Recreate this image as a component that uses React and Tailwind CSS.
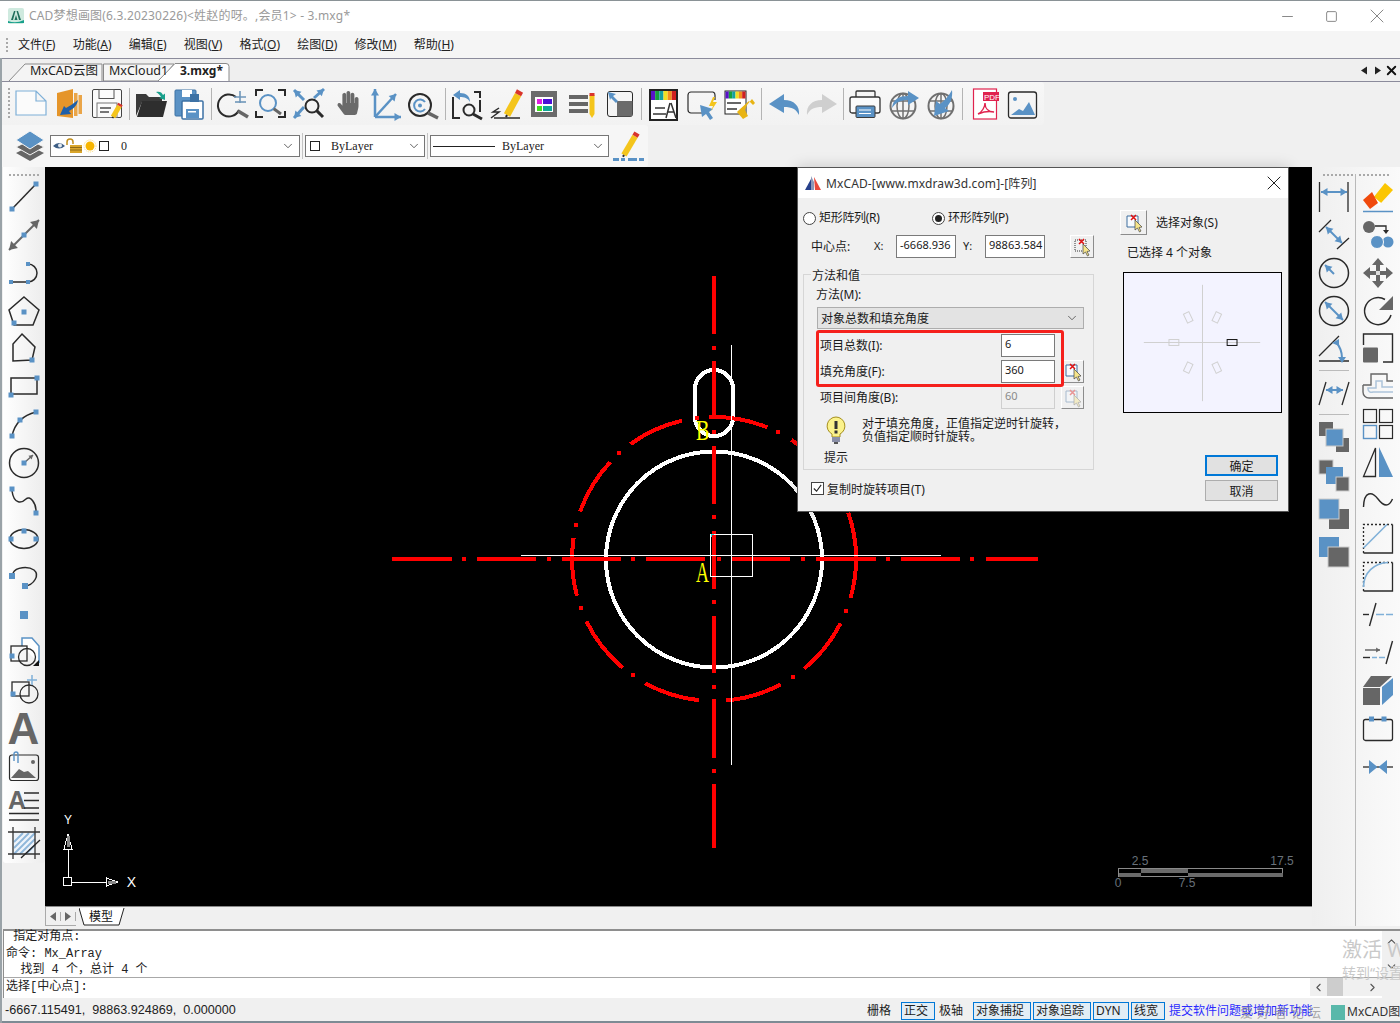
import { ChevronDown, ChevronLeft, ChevronRight, ChevronUp, Minus, Square, X } from "lucide-react";
import { FaHandPaper } from "react-icons/fa";

const B = "#5a92c5";
const G = "#666666";
const K = "#2a2a2a";
const Y = "#f4c51c";
const RD = "#d9342b";

const sans = "font-['Noto_Sans','Noto_Sans_CJK_SC',sans-serif]";
const mono = "font-['Liberation_Mono','Noto_Sans_CJK_SC',monospace]";
const serif = "font-['Liberation_Serif','Noto_Sans_CJK_SC',serif]";

const Box = ({ children }) => (
  <svg viewBox="0 0 32 32" width="32" height="32" fill="none" className="block shrink-0 overflow-visible">
    {children}
  </svg>
);

const Sq = ({ x, y, s = 5 }) => <rect x={x - s / 2} y={y - s / 2} width={s} height={s} fill={B} />;

// line with a filled head at the end (and at the start too when both is set)
const Arrow = ({ x1, y1, x2, y2, c = B, w = 2, h = 5, both }) => {
  const a = Math.atan2(y2 - y1, x2 - x1);
  const head = (x, y, t) => {
    const p = (d, o) => `${x + Math.cos(t) * d - Math.sin(t) * o},${y + Math.sin(t) * d + Math.cos(t) * o}`;
    return `${p(0, 0)} ${p(-h * 1.3, h * 0.8)} ${p(-h * 1.3, -h * 0.8)}`;
  };
  return (
    <>
      <line x1={x1} y1={y1} x2={x2} y2={y2} stroke={c} strokeWidth={w} />
      <polygon points={head(x2, y2, a)} fill={c} />
      {both && <polygon points={head(x1, y1, a + Math.PI)} fill={c} />}
    </>
  );
};

const Pencil = ({ x1, y1, x2, y2, w = 6 }) => {
  const dx = x2 - x1;
  const dy = y2 - y1;
  return (
    <>
      <line x1={x1} y1={y1} x2={x1 + dx * 0.85} y2={y1 + dy * 0.85} stroke={Y} strokeWidth={w} />
      <line x1={x1 + dx * 0.85} y1={y1 + dy * 0.85} x2={x2} y2={y2} stroke={RD} strokeWidth={w} />
      <line x1={x1} y1={y1} x2={x1 - dx * 0.08} y2={y1 - dy * 0.08} stroke={K} strokeWidth={2} />
    </>
  );
};

const Glass = ({ cx, cy, r, x, y, c = K, sw = 2, hc = K, hw = 3 }) => (
  <>
    <circle cx={cx} cy={cy} r={r} stroke={c} strokeWidth={sw} />
    <line x1={cx + r * 0.72} y1={cy + r * 0.72} x2={x} y2={y} stroke={hc} strokeWidth={hw} />
  </>
);

const Stripes = ({ x, y, w, h }) => {
  const cols = ["#5a12c8", "#14a03c", "#14a0a0", "#f0e020", "#f09020", "#d02020"];
  return cols.map((c, i) => <rect key={c} x={x + (i * w) / 6} y={y} width={w / 6} height={h} fill={c} />);
};

const Globe = () => (
  <>
    <circle cx="16" cy="18" r="12.5" stroke="#707070" strokeWidth="2" />
    <ellipse cx="16" cy="18" rx="6" ry="12.5" stroke="#707070" strokeWidth="1.5" />
    <line x1="4" y1="13" x2="28" y2="13" stroke="#707070" strokeWidth="1.5" />
    <line x1="4" y1="23" x2="28" y2="23" stroke="#707070" strokeWidth="1.5" />
    <line x1="16" y1="6" x2="16" y2="30" stroke="#707070" strokeWidth="1.5" />
  </>
);

const toolbar = [
  [<path key="a" d="M1 3H21L31 13V27H1ZM21 3V13H31" fill="#fbfbfb" stroke="#7fb0d8" strokeWidth="1.2" />],
  [
    <path key="a" d="M4 5L20 1V30L4 28Z" fill="#e5952a" />,
    <rect key="b" x="21" y="5" width="3.5" height="23" fill="#eaa548" />,
    <rect key="c" x="25.5" y="7" width="3.5" height="19" fill="#eaa548" />,
    <path key="d" d="M25 12C24 18 20 21 16 23L18 26L7 27L11 18L13 20C17 18 21 15 25 12Z" fill="#1f5fa8" />,
  ],
  [
    <rect key="a" x="1.5" y="1.5" width="29" height="28" rx="1.5" fill="#fbfbfb" stroke="#444" />,
    <rect key="b" x="8" y="1.5" width="15" height="9" stroke="#555" />,
    <rect key="c" x="6" y="15" width="20" height="14.5" stroke="#777" />,
    <rect key="d" x="9" y="19" width="11" height="2" fill="#777" />,
    <rect key="e" x="9" y="23" width="9" height="2" fill="#777" />,
    <Pencil key="f" x1={22} y1={29} x2={29.5} y2={16} w={5} />,
  ],
  "s6",
  [
    <path key="a" d="M1 6H11L14 9H27V14H7L1 28Z" fill="#3a3a3a" />,
    <path key="b" d="M7 13H32L28 29H2Z" fill="#2e2e2e" />,
    <path key="c" d="M21 4C24 3 27 4 28 7L30 5.5L30 12L24 10L26 9C25 7 23 5 21 4Z" fill="#18a08c" />,
  ],
  [
    <rect key="a" x="2" y="2" width="21" height="26" rx="1" fill={B} stroke="#3d72a5" />,
    <rect key="b" x="9" y="13" width="21" height="18" rx="1" fill="#fff" stroke="#3d72a5" strokeWidth="1.5" />,
    <rect key="c" x="9" y="2" width="10" height="7" fill="#fff" />,
    <rect key="d" x="17" y="6" width="9" height="8" fill="#3d72a5" />,
    <rect key="e" x="13" y="21" width="13" height="9" fill={B} />,
    <rect key="f" x="15" y="23" width="8" height="1.5" fill="#fff" />,
  ],
  "s6",
  [
    <path key="a" d="M19 9A11 11 0 1 0 22 22" stroke={K} strokeWidth="2" />,
    <line key="b" x1="21" y1="23" x2="31" y2="29" stroke="#666" strokeWidth="3.5" />,
    <path key="c" d="M17 9H29M23 3V15" stroke="#6f97ba" strokeWidth="1.6" />,
    <path key="d" d="M18 14H29" stroke="#6f97ba" strokeWidth="1.6" />,
  ],
  [
    <path key="a" d="M1 8V2H8M23 2H30V8M1 23V29H8M23 29H30V23" stroke={K} strokeWidth="2" />,
    <Glass key="b" cx={13} cy={15} r={8} x={26} y={26} c={B} sw={2} hc={G} />,
  ],
  [
    <Arrow key="a" x1={11} y1={12} x2={1} y2={2} w={3} h={5} />,
    <Arrow key="b" x1={21} y1={10} x2={31} y2={1} w={3} h={5} />,
    <Arrow key="c" x1={11} y1={19} x2={1} y2={30} w={3} h={5} />,
    <Glass key="d" cx={19} cy={18} r={6.5} x={30} y={29} />,
  ],
  [<FaHandPaper key="a" x="5" y="3" size={24} color="#6a6a6a" />],
  [
    <Arrow key="a" x1={6} y1={29} x2={6} y2={1} w={2.5} h={5} />,
    <Arrow key="b" x1={6} y1={29} x2={32} y2={29} w={2.5} h={5} />,
    <Arrow key="c" x1={6} y1={29} x2={27} y2={6} w={2.5} h={5} />,
  ],
  [
    <Glass key="a" cx={13} cy={17} r={11} x={31} y={30} hc={G} hw={3.5} />,
    <path key="b" d="M18 14A6 6 0 1 0 18 21" stroke={B} strokeWidth="2" />,
    <circle key="c" cx="13" cy="17.5" r="2" fill={B} />,
  ],
  "s7",
  [
    <path key="a" d="M1 9V30H8M22 4H28V10M28 24V12" stroke={K} strokeWidth="2" />,
    <path key="b" d="M1 7L8 2V5C14 5 18 8 18 14C16 10 12 9 8 9V12Z" fill={B} />,
    <Glass key="c" cx={17} cy={22} r={5.5} x={30} y={31} />,
  ],
  [
    <Pencil key="a" x1={17} y1={27} x2={30} y2={3} w={7} />,
    <path key="b" d="M1 30L9 24H3L9 20" stroke={K} strokeWidth="1.5" />,
    <line key="c" x1="4" y1="30" x2="30" y2="30" stroke={K} strokeWidth="1.5" />,
  ],
  [
    <rect key="a" x="3" y="3" width="26" height="26" fill="#6b6b6b" />,
    <rect key="b" x="7" y="9" width="18" height="15" fill="#fff" />,
    <rect key="c" x="9" y="11" width="5" height="5" fill="#e020e0" />,
    <rect key="d" x="15" y="11" width="9" height="5" fill="#4a10d8" />,
    <rect key="e" x="9" y="18" width="5" height="5" fill="#40e020" />,
    <rect key="f" x="15" y="18" width="9" height="5" fill="#10a898" />,
  ],
  [
    <rect key="a" x="3" y="7" width="19" height="4" fill={G} />,
    <rect key="b" x="3" y="14" width="19" height="4" fill={G} />,
    <rect key="c" x="3" y="21" width="19" height="4" fill={G} />,
    <rect key="d" x="23.5" y="7" width="5" height="19" fill={Y} />,
    <rect key="e" x="23.5" y="5" width="5" height="3" fill={RD} />,
    <path key="f" d="M23.5 26L26 30L28.5 26Z" fill={Y} />,
  ],
  [
    <rect key="a" x="3.5" y="3.5" width="25" height="25" rx="2.5" stroke={K} />,
    <path key="b" d="M13 13H28.5V26A2 2 0 0 1 26 28.5H13Z" fill="#6b6b6b" />,
    <path key="c" d="M4 4L12 6L9 8L14 13L12 15L7 10L6 12Z" fill={B} />,
  ],
  "s5",
  [
    <rect key="a" x="3" y="2" width="27" height="30" fill="#fff" stroke="#222" strokeWidth="2" />,
    <Stripes key="b" x={4} y={3} w={25} h={9} />,
    <rect key="c" x="8" y="19" width="10" height="2" fill={G} />,
    <rect key="d" x="6" y="25" width="13" height="2" fill={G} />,
    <path key="e" d="M23 15L19 30M24 15L29 30M21 24H27" stroke="#333" strokeWidth="1.5" />,
  ],
  [
    <path key="a" d="M20 25H6A3 3 0 0 1 3 22V7A3 3 0 0 1 6 4H28A3 3 0 0 1 30 7V12" stroke={K} strokeWidth="1.2" />,
    <path key="b" d="M15 17L28 21L24 24L28 30L25 32L21 26L17 29Z" fill={B} />,
    <path key="c" d="M28 9L24 18H28L26 23L32 14H28L30 9Z" fill={Y} />,
  ],
  [
    <rect key="a" x="2" y="3" width="21" height="23" fill="#fff" stroke="#222" />,
    <Stripes key="b" x={2.5} y={3.5} w={20} h={7} />,
    <path key="c" d="M4 15H18M4 21H14" stroke={G} strokeWidth="2" />,
    <path key="d" d="M16 22L26 13L30 17L32 15L29 11L24 17L22 22L25 28L20 31L14 24Z" fill="#e8b414" />,
  ],
  "s7",
  [<path key="a" d="M1 16L16 6V12C26 12 32 18 31 27C28 21 24 19 16 19V25Z" fill={B} />],
  [<path key="a" d="M31 16L16 6V12C6 12 0 18 1 27C4 21 8 19 16 19V25Z" fill="#cfcfcf" />],
  "s5",
  [
    <rect key="a" x="7" y="3" width="19" height="8" rx="1" stroke="#333" strokeWidth="1.3" />,
    <rect key="b" x="1" y="9" width="30" height="16" rx="2" fill="#fbfbfb" stroke="#333" strokeWidth="1.3" />,
    <rect key="c" x="7" y="18" width="19" height="11.5" rx="1" fill={B} stroke="#3b3b3b" />,
    <path key="d" d="M10 22H22M10 25.5H22" stroke="#fff" />,
  ],
  [
    <Globe key="a" />,
    <path key="b" d="M5 20C6 11 12 8 21 8V3L32 10L21 17V12C14 12 9 14 5 20Z" fill={B} />,
  ],
  [
    <Globe key="a" />,
    <path key="b" d="M27 2C28 10 25 17 20 20L24 23L9 28L11 13L15 16C19 13 24 8 27 2Z" fill={B} />,
  ],
  "s5",
  [
    <rect key="a" x="5.5" y="1" width="23" height="30" fill="#fff" stroke="#e0224e" strokeWidth="1.2" />,
    <rect key="b" x="15" y="4" width="16" height="9" fill="#e0224e" />,
    <text key="c" x="16" y="11.5" fontSize="8" fill="#fff" fontFamily="Liberation Sans">PDF</text>,
    <path key="d" d="M10 26C14 24 17 19 17 15C17 20 20 24 26 24C21 23 15 24 10 26Z" stroke="#e0224e" strokeWidth="1.4" />,
  ],
  [
    <rect key="a" x="2.5" y="4" width="28" height="26" rx="2.5" stroke={K} strokeWidth="1.3" />,
    <circle key="b" cx="9" cy="11" r="2" fill={B} />,
    <path key="c" d="M5 27L13 21L17 23L23 14L29 27Z" fill={B} />,
  ],
];

const leftIcons = [
  <Box key="1"><line x1="4" y1="28" x2="28" y2="3" stroke={K} strokeWidth="1.5" /><Sq x={28} y={3} /><Sq x={4} y={28} /></Box>,
  <Box key="2"><Arrow x1={1} y1={31} x2={31} y2={1} c={G} w={2} h={6} both /><Sq x={16} y={16} /></Box>,
  <Box key="3"><path d="M3 25H20A9 9 0 0 0 20 7" stroke={K} strokeWidth="1.5" /><Sq x={3} y={25} s={4} /><Sq x={20} y={25} s={4} /><Sq x={20} y={7} s={4} /></Box>,
  <Box key="4"><path d="M16 2L31 15L25 30H6L1 15Z" stroke={K} strokeWidth="1.5" /><Sq x={16} y={17} /><Sq x={6} y={28} /></Box>,
  <Box key="5"><path d="M14 1L27 14L24 27L5 28V11Z" stroke={K} strokeWidth="1.5" /><Sq x={24} y={27} /></Box>,
  <Box key="6"><rect x="3" y="7" width="26" height="16" stroke={K} strokeWidth="1.5" /><Sq x={29} y={7} /><Sq x={3} y={24} /></Box>,
  <Box key="7"><path d="M4 27Q8 8 28 3" stroke={K} strokeWidth="1.5" /><Sq x={4} y={27} /><Sq x={12} y={11} /><Sq x={28} y={3} /></Box>,
  <Box key="8"><circle cx="16" cy="16" r="14.5" stroke={K} strokeWidth="1.5" /><Arrow x1={16} y1={16} x2={25} y2={8} c={G} w={1.5} h={3} /><Sq x={16} y={16} /></Box>,
  <Box key="9"><path d="M4 6C6 20 14 18 18 14C22 10 28 18 28 26" stroke={K} strokeWidth="1.5" /><Sq x={4} y={4} /><Sq x={28} y={28} /></Box>,
  <Box key="10"><ellipse cx="16" cy="16" rx="14" ry="9.5" stroke={K} strokeWidth="1.5" /><Sq x={3} y={16} /><Sq x={28} y={16} /><Sq x={16} y={8} /></Box>,
  <Box key="11"><path d="M5 12C8 6 20 5 26 9C32 14 26 24 17 25" stroke={K} strokeWidth="1.5" /><Sq x={4} y={15} s={6} /><Sq x={17} y={25} s={6} /></Box>,
  <Box key="12"><Sq x={16} y={16} s={8} /></Box>,
  <Box key="13">
    <path d="M14 9V1H24L31 9V26" fill="#fff" stroke={B} strokeWidth="1.5" />
    <rect x="3" y="9" width="16" height="15" stroke={K} strokeWidth="1.3" />
    <circle cx="19" cy="20" r="8.5" stroke={K} strokeWidth="1.3" />
    <Sq x={4} y={19} />
    <path d="M25 29H31V23Z" fill="#111" />
  </Box>,
  <Box key="14">
    <rect x="4" y="7" width="17" height="14" stroke={K} strokeWidth="1.3" />
    <circle cx="21" cy="19" r="9" stroke={K} strokeWidth="1.3" />
    <Sq x={5} y={19} />
    <path d="M24 0V10M19 5H29" stroke="#7fb0d8" strokeWidth="1.5" />
  </Box>,
  <span key="15" className="block text-[44px] leading-[38px] font-bold text-[#666] font-['Liberation_Sans',sans-serif]">A</span>,
  <Box key="16">
    <rect x="1.5" y="4" width="29" height="25.5" rx="2.5" stroke={K} strokeWidth="1.2" />
    <path d="M3 27L11 18L16 21L20 20L28 27Z" fill={G} />
    <circle cx="25" cy="11" r="2" fill={G} />
    <path d="M6 10V3A2 2 0 0 1 10 3V12" stroke={B} strokeWidth="1.4" />
  </Box>,
  <Box key="17">
    <text x="0" y="20" fontSize="25" fontWeight="700" fill={G} fontFamily="Liberation Sans">A</text>
    <path d="M16 4H31M16 11.500H31M16 19H31M1 24.500H31M1 31H31" stroke={K} strokeWidth="1.4" />
  </Box>,
  <Box key="18">
    <path d="M5 5L27 5L27 27L5 27Z" fill="#eef4fa" />
    <path d="M6 15L15 6M6 21L21 6M6 27L27 6M12 27L27 12M18 27L27 18" stroke="#8fb7da" strokeWidth="1.8" />
    <path d="M0 5H32M0 27H32M5 0V32M27 0V32" stroke="#333" strokeWidth="1.3" />
    <path d="M13 31L32 13" stroke="#222" strokeWidth="1.3" />
  </Box>,
];

const rightA = [
  <Box key="1"><path d="M1.500 1V31M30 1V31" stroke={K} strokeWidth="1.300" /><Arrow x1={3} y1={11} x2={29} y2={11} h={5} both /></Box>,
  <Box key="2"><path d="M1 13L13 1M19 30L31 19" stroke={K} strokeWidth="1.300" /><Arrow x1={8} y1={8} x2={24} y2={24} h={5} both /></Box>,
  <Box key="3"><circle cx="16" cy="16" r="14.500" stroke={K} strokeWidth="1.500" /><Arrow x1={16} y1={17} x2={7} y2={8} h={5} /></Box>,
  <Box key="4"><circle cx="16" cy="16" r="14.500" stroke={K} strokeWidth="1.500" /><Arrow x1={7} y1={7} x2={25} y2={25} h={5} both /></Box>,
  <Box key="5"><path d="M1 23L21 3M1 28H31" stroke={K} strokeWidth="1.300" /><path d="M18 9Q24 16 24 25" stroke={B} strokeWidth="2" /><path d="M14 10L21 6L21 13ZM20 24H28L24 30Z" fill={B} /></Box>,
];

const rightA2 = [
  <Box key="7"><rect x="1" y="1" width="14" height="14" fill={G} /><rect x="18" y="17" width="13" height="14" fill={G} /><rect x="8" y="8" width="17" height="17" fill={B} stroke="#c6c6c6" /></Box>,
  <Box key="8"><rect x="1" y="1" width="14" height="14" fill={G} stroke="#ccc" /><rect x="8" y="8" width="17" height="17" fill={B} /><rect x="18" y="18" width="13" height="14" fill={G} stroke="#ccc" /></Box>,
  <Box key="9"><rect x="11" y="12" width="20" height="20" fill={G} /><rect x="1" y="2" width="20" height="20" fill={B} stroke="#ccc" /></Box>,
  <Box key="10"><rect x="1" y="2" width="20" height="20" fill={B} /><rect x="10" y="12" width="21" height="20" fill={G} stroke="#ccc" /></Box>,
];

const rightB = [
  <Box key="1">
    <path d="M11 17L23 2L31 9L19 22Z" fill="#fbc602" />
    <path d="M9 18L11 15L19 22L17 25Z" fill="#fff" />
    <path d="M1 19L10 11L16 22L8 28Z" fill="#f04a0c" />
    <line x1="1" y1="30.500" x2="31" y2="30.500" stroke={B} strokeWidth="1.500" />
  </Box>,
  <Box key="2">
    <circle cx="7" cy="8" r="6" fill={G} />
    <path d="M13 7H24V12" stroke={K} strokeWidth="1.300" />
    <path d="M21 11H27L24 15Z" fill={K} />
    <circle cx="26" cy="23" r="5.500" fill={B} />
    <circle cx="15" cy="23" r="6.500" fill={B} stroke="#fafafa" />
  </Box>,
  <Box key="3">
    <path d="M16 1L22 8H18V14H24V10L31 16L24 22V18H18V24H22L16 31L10 24H14V18H8V22L1 16L8 10V14H14V8H10Z" fill={G} />
    <rect x="14" y="14" width="4" height="4" fill="#ddd" />
  </Box>,
  <Box key="4">
    <path d="M23 4.500A13.500 13.500 0 1 0 29 20" stroke={K} strokeWidth="1.500" />
    <path d="M31 1V15H17Z" fill={G} />
  </Box>,
  <Box key="5">
    <path d="M1.500 12V1H30.500V29H21" stroke={K} strokeWidth="1.400" />
    <rect x="1" y="14.500" width="15" height="15" rx="1" fill={G} />
  </Box>,
  <Box key="6">
    <path d="M1 14H9V3H25V10H31M31 27H7A6 6 0 0 1 1 21V14" stroke={G} strokeWidth="1.400" />
    <path d="M31 21H11A3.500 3.500 0 0 1 6 18V17H14V10H20V16H31" stroke="#adc4da" strokeWidth="1.500" />
  </Box>,
  <Box key="7">
    <rect x="1.500" y="0.500" width="13" height="13" stroke={K} strokeWidth="1.200" />
    <rect x="17.500" y="0.500" width="13" height="13" stroke={K} strokeWidth="1.200" />
    <rect x="1.500" y="16.500" width="13" height="13" stroke={B} strokeWidth="1.400" />
    <rect x="17.500" y="16.500" width="13" height="13" stroke={K} strokeWidth="1.200" />
  </Box>,
  <Box key="8">
    <path d="M13.500 1V29.500H1.500Z" stroke={K} strokeWidth="1.300" />
    <path d="M17 0V30H31Z" fill={B} />
  </Box>,
  <Box key="9"><path d="M1.500 22C2 6 10 6 16 14C22 22 27 22 30.500 14" stroke={K} strokeWidth="1.400" /></Box>,
  <Box key="10">
    <path d="M1.500 30V1.500H30.500" stroke={K} strokeWidth="1.300" strokeDasharray="2 2" />
    <path d="M1.500 30H30.500V1.500" stroke={K} strokeWidth="1.300" />
    <line x1="1.500" y1="25" x2="25" y2="1.500" stroke="#7fb0d8" strokeWidth="1.600" />
  </Box>,
  <Box key="11">
    <path d="M1.500 30V1.500H30.500" stroke={K} strokeWidth="1.300" strokeDasharray="2 2" />
    <path d="M1.500 30H30.500V1.500" stroke={K} strokeWidth="1.300" />
    <path d="M1.500 26C1.500 12 12 2 26 1.500" stroke="#7fb0d8" strokeWidth="1.600" />
  </Box>,
  <Box key="12">
    <line x1="7.500" y1="27" x2="14" y2="4" stroke={K} strokeWidth="1.400" />
    <path d="M1 15.500H7" stroke={K} strokeWidth="1.400" />
    <path d="M14 15.500H22M24 15.500H31" stroke="#7fb0d8" strokeWidth="1.500" />
  </Box>,
  <Box key="13">
    <line x1="24" y1="27" x2="30.500" y2="4" stroke={K} strokeWidth="1.400" />
    <Arrow x1={3} y1={13} x2={18} y2={13} c={G} w={1.500} h={3} />
    <path d="M1 20.500H8" stroke={K} strokeWidth="1.400" />
    <path d="M10 20.500H15M17 20.500H23" stroke="#7fb0d8" strokeWidth="1.500" />
  </Box>,
  <Box key="14">
    <rect x="1" y="13" width="17" height="17" fill={G} />
    <path d="M1 12L9 1H30L18 12Z" fill={G} />
    <path d="M20 12L31 3V20L20 30Z" fill={B} />
  </Box>,
  <Box key="15">
    <rect x="1.500" y="6.500" width="29" height="21" rx="2" stroke={K} strokeWidth="1.300" />
    <Sq x={9.500} y={6} s={5} />
    <Sq x={22} y={6} s={5} />
  </Box>,
  <Box key="16">
    <line x1="1" y1="16" x2="31" y2="16" stroke={K} strokeWidth="1.300" />
    <path d="M7 9L15.500 16L7 23ZM25 9L16.500 16L25 23Z" fill={B} />
  </Box>,
];

const Grip = ({ className }) => <div className={`border-dotted border-[#a9a9a9] ${className}`} />;

const Sep = ({ w }) => (
  <div className={`flex shrink-0 h-[32px] justify-center ${w}`}>
    <div className="w-px bg-[#b4b4b4]" />
  </div>
);

// red cross and cursor used on the dialog's picker buttons
const PickIcon = ({ faded, dotted }) => (
  <svg viewBox="0 0 20 20" width="20" height="20" fill="none" className={faded ? "opacity-40" : ""}>
    <path d="M3 3H14V14H3Z" fill={dotted ? "none" : "#f7fbff"} stroke={dotted ? "#333" : "#3f6f9e"} strokeDasharray={dotted ? "1 1" : "none"} />
    <path d="M7 2L12 7M12 2L7 7" stroke="#e01010" strokeWidth="1.500" />
    <path d="M11 7L11 17L13.500 15L15.500 19L17 18L15 14.500L18 14Z" fill="#f6e58a" stroke="#444" strokeWidth="0.700" />
  </svg>
);

const PickBtn = ({ className = "", faded, dotted }) => (
  <button
    className={`flex shrink-0 items-center justify-center border border-t-white border-l-white border-r-[#8c8c8c] border-b-[#8c8c8c] bg-[#f0f0f0] ${className}`}
  >
    <PickIcon faded={faded} dotted={dotted} />
  </button>
);

const Field = ({ value, className = "", disabled }) => (
  <div
    className={`flex shrink-0 items-center h-[23px] border px-[3px] pb-[2px] text-[11px] ${
      disabled ? "border-[#cfcfcf] bg-[#f0f0f0] text-[#8a8a8a]" : "border-[#7a7a7a] bg-white text-[#1a1a1a]"
    } ${className}`}
  >
    {value}
  </div>
);

const Radio = ({ checked }) => (
  <span className="flex shrink-0 w-[13px] h-[13px] items-center justify-center rounded-full border border-[#444] bg-white">
    {checked && <span className="w-[7px] h-[7px] rounded-full bg-[#222]" />}
  </span>
);

const deg = (a) => (a * Math.PI) / 180;
const onRing = (a, r = 142) => [714 + r * Math.cos(deg(a)), 559 + r * Math.sin(deg(a))];
const arcs = [
  [27, 50.5], [62, 85], [96, 119], [130, 154], [165, 188.5], [199.5, 223], [234, 257], [268, 292], [303, 326], [341, 376],
];
const ringDots = [21.5, 56, 90, 125, 160, 194, 228, 263, 297];
const hDash = [[392, 452], [477, 536], [562, 621], [646, 705], [732, 790], [816, 876], [901, 960], [986, 1038]];
const hDots = [464, 549, 633, 719, 803, 888, 972];
const vDash = [[276, 334], [361, 417], [446, 504], [531, 589], [616, 673], [700, 758], [784, 848]];
const vDots = [348, 432, 517, 602, 687, 771];

function Drawing() {
  return (
    <svg viewBox="45 167 1267 739" fill="none" className="block w-full h-full">
      <g shapeRendering="crispEdges">
        <circle cx="714" cy="559.500" r="108" stroke="#fff" strokeWidth="4" />
        <rect x="695" y="370" width="38" height="66" rx="19" stroke="#fff" strokeWidth="4" />
        {hDash.map(([a, b]) => <rect key={a} x={a} y="557" width={b - a} height="4" fill="#f00" />)}
        {hDots.map((x) => <rect key={x} x={x - 2} y="557" width="4" height="4" fill="#f00" />)}
        {vDash.map(([a, b]) => <rect key={a} x="712" y={a} width="4" height={b - a} fill="#f00" />)}
        {vDots.map((y) => <rect key={y} x="712" y={y - 2} width="4" height="4" fill="#f00" />)}
        {arcs.map(([a, b]) => {
          const [x1, y1] = onRing(a);
          const [x2, y2] = onRing(b);
          return <path key={a} d={`M${x1} ${y1}A142 142 0 0 1 ${x2} ${y2}`} stroke="#f00" strokeWidth="4" />;
        })}
        {ringDots.map((a) => {
          const [x, y] = onRing(a);
          return <rect key={a} x={x - 2} y={y - 2} width="4" height="4" fill="#f00" />;
        })}
        <path d="M731.500 345V765M521 555.500H941" stroke="#fff" />
        <rect x="710.500" y="534.500" width="42" height="42" stroke="#fff" />
        <path d="M714 534.500H711V537" stroke="#19e0e0" />
        <rect x="63.500" y="877.500" width="8" height="8" stroke="#fff" strokeWidth="1.200" />
        <path d="M68 877V850M72 882H106" stroke="#fff" />
        <path d="M68 834L72 849H64Z" stroke="#fff" />
        <path d="M68 836L68 847" stroke="#888" strokeWidth="3" />
        <path d="M118 882L106.500 878V886Z" stroke="#fff" />
        <path d="M108 882H116" stroke="#888" strokeWidth="3" />
        <rect x="1118.500" y="868.500" width="164" height="8" stroke="#8a8a8a" />
        <rect x="1141" y="869" width="47" height="3.500" fill="#6a6a6a" />
        <rect x="1119" y="872.500" width="22" height="4" fill="#6a6a6a" />
        <rect x="1188" y="872.500" width="94.500" height="4" fill="#6a6a6a" />
      </g>
      <text transform="translate(696 582) scale(0.62 1)" fontSize="29" fill="#ffff00" fontFamily="Liberation Serif">A</text>
      <text transform="translate(696 440) scale(0.7 1)" fontSize="29" fill="#ffff00" fontFamily="Liberation Serif">B</text>
      <text x="68" y="824" fontSize="12" fill="#fff" textAnchor="middle" fontFamily="Liberation Sans">Y</text>
      <text x="131.500" y="887" fontSize="14" fill="#fff" textAnchor="middle" fontFamily="Liberation Sans">X</text>
      <g fontSize="12" fill="#68717a" fontFamily="Liberation Sans" textAnchor="middle">
        <text x="1140" y="865">2.5</text>
        <text x="1282" y="865">17.5</text>
        <text x="1118" y="887">0</text>
        <text x="1187" y="887">7.5</text>
      </g>
    </svg>
  );
}

function ArrayDialog() {
  return (
    <div className={`absolute left-[752px] top-0 w-[492px] h-[345px] flex flex-col border border-[#555] bg-[#f0f0f0] text-[12px] text-[#1a1a1a] shadow-[0_0_14px_rgba(0,0,0,0.18)] ${sans}`}>
      <div className="flex items-center h-[30px] bg-white pl-[7px] pr-[2px]">
        <svg viewBox="0 0 16 16" width="16" height="16" className="shrink-0">
          <path d="M0 15L6 4V15Z" fill="#27408b" />
          <path d="M6 15V1L9 7V15Z" fill="#8a96b8" />
          <path d="M9 2L16 15H10Z" fill="#e8483c" />
        </svg>
        <span className="ml-[5px] pt-px text-[12px] tracking-[0.12px] text-[#333]">MxCAD-[www.mxdraw3d.com]-[阵列]</span>
        <X size={24} strokeWidth={1} className="ml-auto text-[#222]" />
      </div>

      <div className="flex flex-1">
        <div className="w-[291px] ml-[5px] flex flex-col">
          <div className="flex items-center h-[16px] mt-[12px]">
            <div className="flex items-center w-[129px] gap-[3px]"><Radio /><span className="tracking-[-0.3px]">矩形阵列(R)</span></div>
            <div className="flex items-center gap-[3px]"><Radio checked /><span className="tracking-[-0.3px]">环形阵列(P)</span></div>
          </div>
          <div className="flex items-center h-[23px] mt-[9px] ml-[8px]">
            <span className="w-[63px]">中心点:</span>
            <span className="w-[22px] text-[11px]">X:</span>
            <Field value="-6668.936" className="w-[60px]" />
            <span className="ml-[7px] w-[22px] text-[11px]">Y:</span>
            <Field value="98863.584" className="w-[60px]" />
            <PickBtn className="ml-[25px] w-[24px] h-[23px]" dotted />
          </div>

          <div className="relative h-[196px] mt-[16px] border border-[#d6d6d6]">
            <span className="absolute -top-[8px] left-[7px] bg-[#f0f0f0] px-px">方法和值</span>
            <div className="absolute left-[12px] top-[55px] w-[248px] h-[57px] rounded-[3px] border-[3px] border-[#f5201c]" />
            <div className="ml-[12px] mt-[13px] h-[14px] leading-[14px]">方法(M):</div>
            <div className="flex items-center ml-[13px] mt-[5px] w-[267px] h-[22px] border border-[#adadad] bg-[#e3e3e3] pl-[3px] pr-[4px]">
              <span className="pt-[2px]">对象总数和填充角度</span>
              <ChevronDown size={14} strokeWidth={1.2} className="ml-auto text-[#333]" />
            </div>
            <div className="flex items-center ml-[16px] mt-[5px] h-[23px]">
              <span className="w-[181px]">项目总数(I):</span>
              <Field value="6" className="w-[54px]" />
            </div>
            <div className="flex items-center ml-[16px] mt-[3px] h-[23px]">
              <span className="w-[181px]">填充角度(F):</span>
              <Field value="360" className="w-[54px]" />
              <PickBtn className="ml-[6px] w-[23px] h-[23px]" />
            </div>
            <div className="flex items-center ml-[16px] mt-[3px] h-[23px]">
              <span className="w-[181px]">项目间角度(B):</span>
              <Field value="60" className="w-[54px]" disabled />
              <PickBtn className="ml-[6px] w-[23px] h-[23px]" faded />
            </div>
            <div className="flex mt-[7px] ml-[20px]">
              <div className="flex flex-col w-[38px]">
                <svg viewBox="0 0 20 28" width="20" height="28" className="ml-[2px]">
                  <path d="M10 1A9 9 0 0 1 14 18V21H6V18A9 9 0 0 1 10 1Z" fill="#fbf28c" stroke="#a58f1c" />
                  <rect x="8.500" y="5" width="3" height="8" fill="#333" />
                  <rect x="8.500" y="14.500" width="3" height="3" fill="#333" />
                  <rect x="6" y="21" width="8" height="5" fill="#8a8fa8" />
                  <rect x="8" y="26" width="4" height="2" fill="#555" />
                </svg>
                <span className="mt-[6px] leading-[16px]">提示</span>
              </div>
              <div className="leading-[13px] pt-px">
                <div>对于填充角度，正值指定逆时针旋转，</div>
                <div>负值指定顺时针旋转。</div>
              </div>
            </div>
          </div>

          <div className="flex items-center ml-[8px] mt-[12px] h-[13px] gap-[3px]">
            <span className="flex w-[13px] h-[13px] items-center justify-center border border-[#444] bg-white">
              <svg viewBox="0 0 12 12" width="11" height="11" fill="none"><path d="M2 6L5 9L10 2" stroke="#222" strokeWidth="1.200" /></svg>
            </span>
            <span className="pt-[2px]">复制时旋转项目(T)</span>
          </div>
        </div>

        <div className="w-[162px] ml-[26px] flex flex-col">
          <div className="flex items-center mt-[12px] h-[25px]">
            <PickBtn className="w-[27px] h-[25px]" />
            <span className="ml-[9px]">选择对象(S)</span>
          </div>
          <div className="ml-[7px] mt-[11px] h-[14px] leading-[14px]">已选择 4 个对象</div>
          <div className="ml-[3px] mt-[12px] w-[159px] h-[141px] border border-black bg-[#f3f3ff]">
            <svg viewBox="0 0 159 141" fill="none" className="block w-full h-full">
              <path d="M20 70.500H138M79.500 12V130" stroke="#cfcfcf" />
              <rect x="45.500" y="67.500" width="10" height="6" stroke="#cfcfcf" />
              <rect x="104.500" y="67.500" width="10" height="6" stroke="#111" />
              <rect x="62" y="40" width="6" height="10" stroke="#d0d0d0" transform="rotate(-25 65 45)" />
              <rect x="91" y="40" width="6" height="10" stroke="#d0d0d0" transform="rotate(25 94 45)" />
              <rect x="62" y="91" width="6" height="10" stroke="#d0d0d0" transform="rotate(25 65 96)" />
              <rect x="91" y="91" width="6" height="10" stroke="#d0d0d0" transform="rotate(-25 94 96)" />
            </svg>
          </div>
          <button className="ml-[85px] mt-[42px] w-[73px] h-[21px] border-2 border-[#0078d7] bg-[#e1e1e1] pt-[2px] leading-[16px]">确定</button>
          <button className="ml-[85px] mt-[4px] w-[73px] h-[21px] border border-[#adadad] bg-[#e1e1e1] pt-[2px] leading-[18px]">取消</button>
        </div>
      </div>
    </div>
  );
}

function TabStrip() {
  return (
    <div className="relative flex h-full w-[230px] text-[12.5px] leading-[24px] text-[#222]">
      <svg viewBox="0 0 230 22" width="230" height="22" className="absolute left-0 top-0" fill="none">
        <path d="M7 22L23 5H100V22" fill="#f4f4f4" stroke="#8a8a8a" />
        <path d="M101.500 22V5H172L158 22Z" fill="#f6f6f6" stroke="#8a8a8a" />
        <path d="M156 22L173 4.500H224Q227 4.500 227 7.500V22" fill="#fff" stroke="#8a8a8a" />
      </svg>
      <span className="relative ml-[28px] w-[79px]">MxCAD云图</span>
      <span className="relative w-[71px]">MxCloud1</span>
      <span className="relative text-[12px] font-bold">3.mxg*</span>
    </div>
  );
}

const MenuLabel = ({ zh, k }) => (
  <span>
    {zh}(<span className="underline">{k}</span>)
  </span>
);

const StatusBtn = ({ children, className = "" }) => (
  <span className={`flex shrink-0 h-[18px] items-center pl-[2px] border border-[#0078d7] bg-[#e2edf5] ${className}`}>
    {children}
  </span>
);

export default function App() {
  return (
    <div className={`relative flex flex-col w-[1400px] h-[1023px] overflow-hidden bg-[#f0f0f0] text-[12px] text-[#222] ${sans}`}>
      <div className="flex items-center shrink-0 h-[31px] border-t border-[#8a9296] bg-white">
        <svg viewBox="0 0 16 16" width="16" height="16" className="ml-[8px] shrink-0">
          <rect x="0" y="0" width="16" height="16" rx="2" fill="#cfeadf" />
          <path d="M3 12L6 3H7.500L5 12ZM8.500 3L11 12H13L10 3ZM6.500 12L8 7L9.500 12Z" fill="#1f6f5c" />
          <path d="M0 13Q8 16 16 12V15H0Z" fill="#18a08c" />
        </svg>
        <span className="ml-[5px] tracking-[0.18px] text-[#9a9a9a]">CAD梦想画图(6.3.20230226)&lt;姓赵的呀。,会员1&gt; - 3.mxg*</span>
        <div className="ml-auto flex items-center text-[#888]">
          <Minus size={17} strokeWidth={1.4} className="mr-[29px]" />
          <Square size={13} strokeWidth={1.8} className="mr-[27px]" />
          <X size={24} strokeWidth={1} className="mr-[11px]" />
        </div>
      </div>

      <div className="flex items-center shrink-0 h-[27px] bg-[#f5f5f5]">
        <Grip className="ml-[6px] h-[14px] border-l-2" />
        <div className="flex ml-[10px] gap-[17.2px] text-[#222]">
          <MenuLabel zh="文件" k="F" />
          <MenuLabel zh="功能" k="A" />
          <MenuLabel zh="编辑" k="E" />
          <MenuLabel zh="视图" k="V" />
          <MenuLabel zh="格式" k="O" />
          <MenuLabel zh="绘图" k="D" />
          <MenuLabel zh="修改" k="M" />
          <MenuLabel zh="帮助" k="H" />
        </div>
      </div>

      <div className="flex flex-col flex-1 min-h-0 border-l-2 border-[#9aa3a8]">
        <div className="flex items-center shrink-0 h-[24px] border-t border-b border-[#8b8b9b] bg-[#efefef]">
          <TabStrip />
          <div className="ml-auto flex items-center pr-[1px]">
            <svg width="8" height="9" viewBox="0 0 8 9"><path d="M7 0.500V8.500L1 4.500Z" fill="#222" /></svg>
            <svg width="8" height="9" viewBox="0 0 8 9" className="ml-[6px]"><path d="M1 0.500V8.500L7 4.500Z" fill="#222" /></svg>
            <X size={15} strokeWidth={3} className="ml-[2px] text-[#111]" />
          </div>
        </div>

        <div className="flex shrink-0 h-[43px] bg-[#f0f0f0]">
          <div className="flex items-start w-[1042px] rounded-r-[3px] bg-gradient-to-b from-[#f7f7f7] to-[#f2f2f2] pl-[6px] pt-[6px]">
            <Grip className="h-[30px] border-l-2" />
            <div className="flex items-start ml-[2px]">
              {toolbar.map((it, i) =>
                typeof it === "string" ? (
                  <Sep key={i} w={it === "s7" ? "w-[7px]" : it === "s6" ? "w-[6px]" : "w-[5px]"} />
                ) : (
                  <div key={i} className="flex shrink-0 w-[38px] justify-center"><Box>{it}</Box></div>
                )
              )}
            </div>
          </div>
        </div>

        <div className="flex shrink-0 h-[42px] bg-[#f0f0f0]">
          <div className="flex items-center w-[646px] bg-[#f6f6f6] rounded-r-[3px]">
            <svg viewBox="0 0 30 32" width="30" height="32" className="ml-[13px] shrink-0">
              <path d="M1 23L15 16L29 23L15 31Z" fill="#666" />
              <path d="M1 17L15 10L29 17L15 25Z" fill="#666" stroke="#f6f6f6" />
              <path d="M1 10L15 1L29 10L15 19Z" fill={B} stroke="#f6f6f6" />
            </svg>
            <div className="flex items-center ml-[5px] w-[250px] h-[22px] border border-[#767676] bg-white pl-[2px] pr-[4px]">
              <svg viewBox="0 0 58 16" width="58" height="16" className="shrink-0">
                <path d="M0 8Q6 2 12 8Q6 13 0 8Z" fill="#3e5e85" />
                <circle cx="7" cy="7.500" r="2" fill="#e3e9f0" />
                <path d="M14 7V4A3 3 0 0 1 20 4V6" stroke="#c18f1e" strokeWidth="1.500" fill="none" />
                <rect x="17" y="7" width="12" height="8" fill="#d9a52a" />
                <path d="M17 9.500H29M17 12H29" stroke="#8f6a16" />
                <circle cx="37" cy="8" r="4.500" fill="#f7b500" />
                <circle cx="37" cy="8" r="6" fill="none" stroke="#fcd870" strokeDasharray="1 1" />
                <rect x="46.500" y="3.500" width="9" height="9" fill="#fff" stroke="#222" />
              </svg>
              <span className={`ml-[10px] text-[12px] ${serif}`}>0</span>
              <ChevronDown size={14} strokeWidth={1.2} className="ml-auto" />
            </div>
            <div className="w-px h-[26px] bg-[#c4c4c4] mx-[2px]" />
            <div className="flex items-center w-[120px] h-[22px] border border-[#767676] bg-white pl-[4px] pr-[3px]">
              <span className="w-[10px] h-[10px] shrink-0 border border-[#222]" />
              <span className={`ml-[11px] text-[12px] ${serif}`}>ByLayer</span>
              <ChevronDown size={14} strokeWidth={1.2} className="ml-auto" />
            </div>
            <div className="w-px h-[26px] bg-[#c4c4c4] mx-[2px]" />
            <div className="flex items-center w-[179px] h-[22px] border border-[#767676] bg-white pl-[2px] pr-[3px]">
              <span className="w-[62px] h-px shrink-0 bg-[#222]" />
              <span className={`ml-[7px] text-[12px] ${serif}`}>ByLayer</span>
              <ChevronDown size={14} strokeWidth={1.2} className="ml-auto" />
            </div>
            <svg viewBox="0 0 32 32" width="32" height="32" className="ml-[4px] shrink-0" fill="none">
              <Pencil x1={11} y1={25} x2={24} y2={3} w={6} />
              <path d="M0 29.500H6M8 29.500H12M15 29.500H24M26 29.500H31" stroke={B} strokeWidth="3" />
            </svg>
          </div>
        </div>

        <div className="flex flex-1 min-h-0">
          <div className="flex shrink-0 flex-col w-[43px] bg-[#f0f0f0]">
            <div className="flex flex-col items-center h-[696px] ml-px bg-gradient-to-r from-[#ffffff] to-[#ececec] rounded-b-[3px] pr-px">
              <Grip className="mt-[7px] w-[30px] h-0 border-t-2" />
              <div className="flex flex-col mt-[2px] items-center">
                {leftIcons.map((ic, i) => (
                  <div key={i} className="flex h-[38px] items-center justify-center">{ic}</div>
                ))}
              </div>
            </div>
          </div>

          <div className="flex flex-col flex-1 min-w-0">
            <div className="relative flex-1 min-h-0 bg-black">
              <Drawing />
              <ArrayDialog />
            </div>
            <div className="flex shrink-0 items-center h-[20px] border-t border-[#8a8a8a] bg-[#f0f0f0]">
              <div className="flex items-center h-[19px] border-l border-b border-[#aaa]">
                <span className="flex w-[15px] justify-center border-r border-[#aaa]">
                  <svg width="6" height="9" viewBox="0 0 6 9"><path d="M6 0V9L0 4.500Z" fill="#666" /></svg>
                </span>
                <span className="flex w-[15px] justify-center border-r border-[#aaa]">
                  <svg width="6" height="9" viewBox="0 0 6 9"><path d="M0 0V9L6 4.500Z" fill="#666" /></svg>
                </span>
              </div>
              <div className="relative flex items-center ml-[3px] w-[46px] h-[18px] justify-center">
                <svg viewBox="0 0 46 18" width="46" height="18" className="absolute inset-0" fill="none">
                  <path d="M0 0L5 17H40L45 0" fill="#fff" stroke="#222" />
                </svg>
                <span className="relative -ml-[2px] text-[#111]">模型</span>
              </div>
            </div>
          </div>

          <div className="flex shrink-0 w-[88px] bg-gradient-to-r from-[#efefef] to-[#fafafa]">
            <div className="flex flex-col items-center w-[43px] pl-px">
              <Grip className="mt-[7px] w-[30px] ml-[7px] h-0 border-t-2" />
              <div className="flex flex-col items-center mt-[2px]">
                {rightA.map((ic, i) => <div key={i} className="flex h-[38px] items-center">{ic}</div>)}
                <div className="flex h-[5px] items-center"><div className="w-[30px] h-px bg-[#bbb]" /></div>
                <div className="flex h-[38px] items-center">
                  <Box>
                    <path d="M1 29L8 6M24 29L31 6" stroke={K} strokeWidth="1.300" />
                    <Arrow x1={8} y1={14} x2={25} y2={14} h={5} both />
                  </Box>
                </div>
                <div className="flex h-[7px] items-center"><div className="w-[30px] h-px bg-[#bbb]" /></div>
                {rightA2.map((ic, i) => <div key={i} className="flex h-[38px] items-center">{ic}</div>)}
              </div>
            </div>
            <div className="w-px mt-[7px] bg-[#b9b9b9]" />
            <div className="flex flex-col items-center w-[44px]">
              <Grip className="mt-[7px] w-[30px] -ml-[8px] h-0 border-t-2" />
              <div className="flex flex-col items-center mt-[2px]">
                {rightB.map((ic, i) => <div key={i} className="flex h-[38px] items-center">{ic}</div>)}
              </div>
            </div>
          </div>
        </div>

        <div className="flex shrink-0 flex-col h-[69px] mt-[3px] ml-px border-t-2 border-l border-[#8e8e8e] bg-white">
          <div className="flex h-[47px] border-b border-[#a8a8a8]">
            <div className={`flex-1 -mt-[2px] overflow-hidden pl-[2px] text-[12px] leading-[16.5px] whitespace-pre ${mono}`}>
              <div>{" 指定对角点:"}</div>
              <div>{"命令: Mx_Array"}</div>
              <div>{"  找到 4 个，总计 4 个"}</div>
            </div>
            <div className="flex w-[18px] flex-col items-center justify-between bg-[#f0f0f0] py-[4px]">
              <ChevronUp size={13} strokeWidth={2} className="text-[#555]" />
              <ChevronDown size={13} strokeWidth={2} className="text-[#555]" />
            </div>
          </div>
          <div className="flex flex-1">
            <div className={`flex-1 pl-[2px] pt-px text-[12px] leading-[16px] ${mono}`}>选择[中心点]:</div>
            <div className="flex items-center w-[72px] h-[18px] bg-[#f0f0f0]">
              <ChevronLeft size={13} strokeWidth={2} className="ml-[2px] text-[#555]" />
              <div className="w-[16px] h-full ml-[2px] bg-[#cdcdcd]" />
              <ChevronRight size={13} strokeWidth={2} className="ml-auto mr-[3px] text-[#555]" />
            </div>
            <div className="w-[18px] bg-[#f0f0f0]" />
          </div>
        </div>

        <div className="flex shrink-0 items-center h-[25px] pt-[2px] border-b-2 border-[#7d8b94] bg-[#f0f0f0] text-[#222]">
          <span className="w-[865px] shrink-0 pl-[3px] text-[12.6px] font-['Liberation_Sans',sans-serif]">-6667.115491,&nbsp;&nbsp;98863.924869,&nbsp;&nbsp;0.000000</span>
          <span className="w-[34px] shrink-0">栅格</span>
          <StatusBtn className="w-[34px]">正交</StatusBtn>
          <span className="w-[38px] shrink-0 pl-[4px]">极轴</span>
          <StatusBtn className="w-[58px]">对象捕捉</StatusBtn>
          <StatusBtn className="ml-[2px] w-[58px]">对象追踪</StatusBtn>
          <StatusBtn className="ml-[2px] w-[36px]">DYN</StatusBtn>
          <StatusBtn className="ml-[2px] w-[34px]">线宽</StatusBtn>
          <span className="ml-[4px] whitespace-nowrap text-[#2a2aff]">提交软件问题或增加新功能</span>
        </div>
      </div>

      {/* activation watermark and forum stamp sitting over the command line and status bar */}
      <div className="absolute left-[1342px] top-[936px] whitespace-nowrap text-[20px] leading-[28px] text-[#c9c9c9]">激活 W</div>
      <div className="absolute left-[1342px] top-[964px] whitespace-nowrap text-[14px] leading-[18px] text-[#c9c9c9]">转到“设置</div>
      <div className="absolute left-[1240px] top-[1004px] flex items-center whitespace-nowrap text-[13px] leading-[16px] text-[#8a8a8a]/70">
        <span className="tracking-[4px]">爱好者论坛</span>
      </div>
      <div className="absolute left-[1331px] top-[1003px] flex items-center gap-[2px] whitespace-nowrap text-[#333]">
        <span className="w-[14px] h-[15px] bg-[#18a08c]/70" />
        <span>MxCAD图</span>
      </div>
    </div>
  );
}
